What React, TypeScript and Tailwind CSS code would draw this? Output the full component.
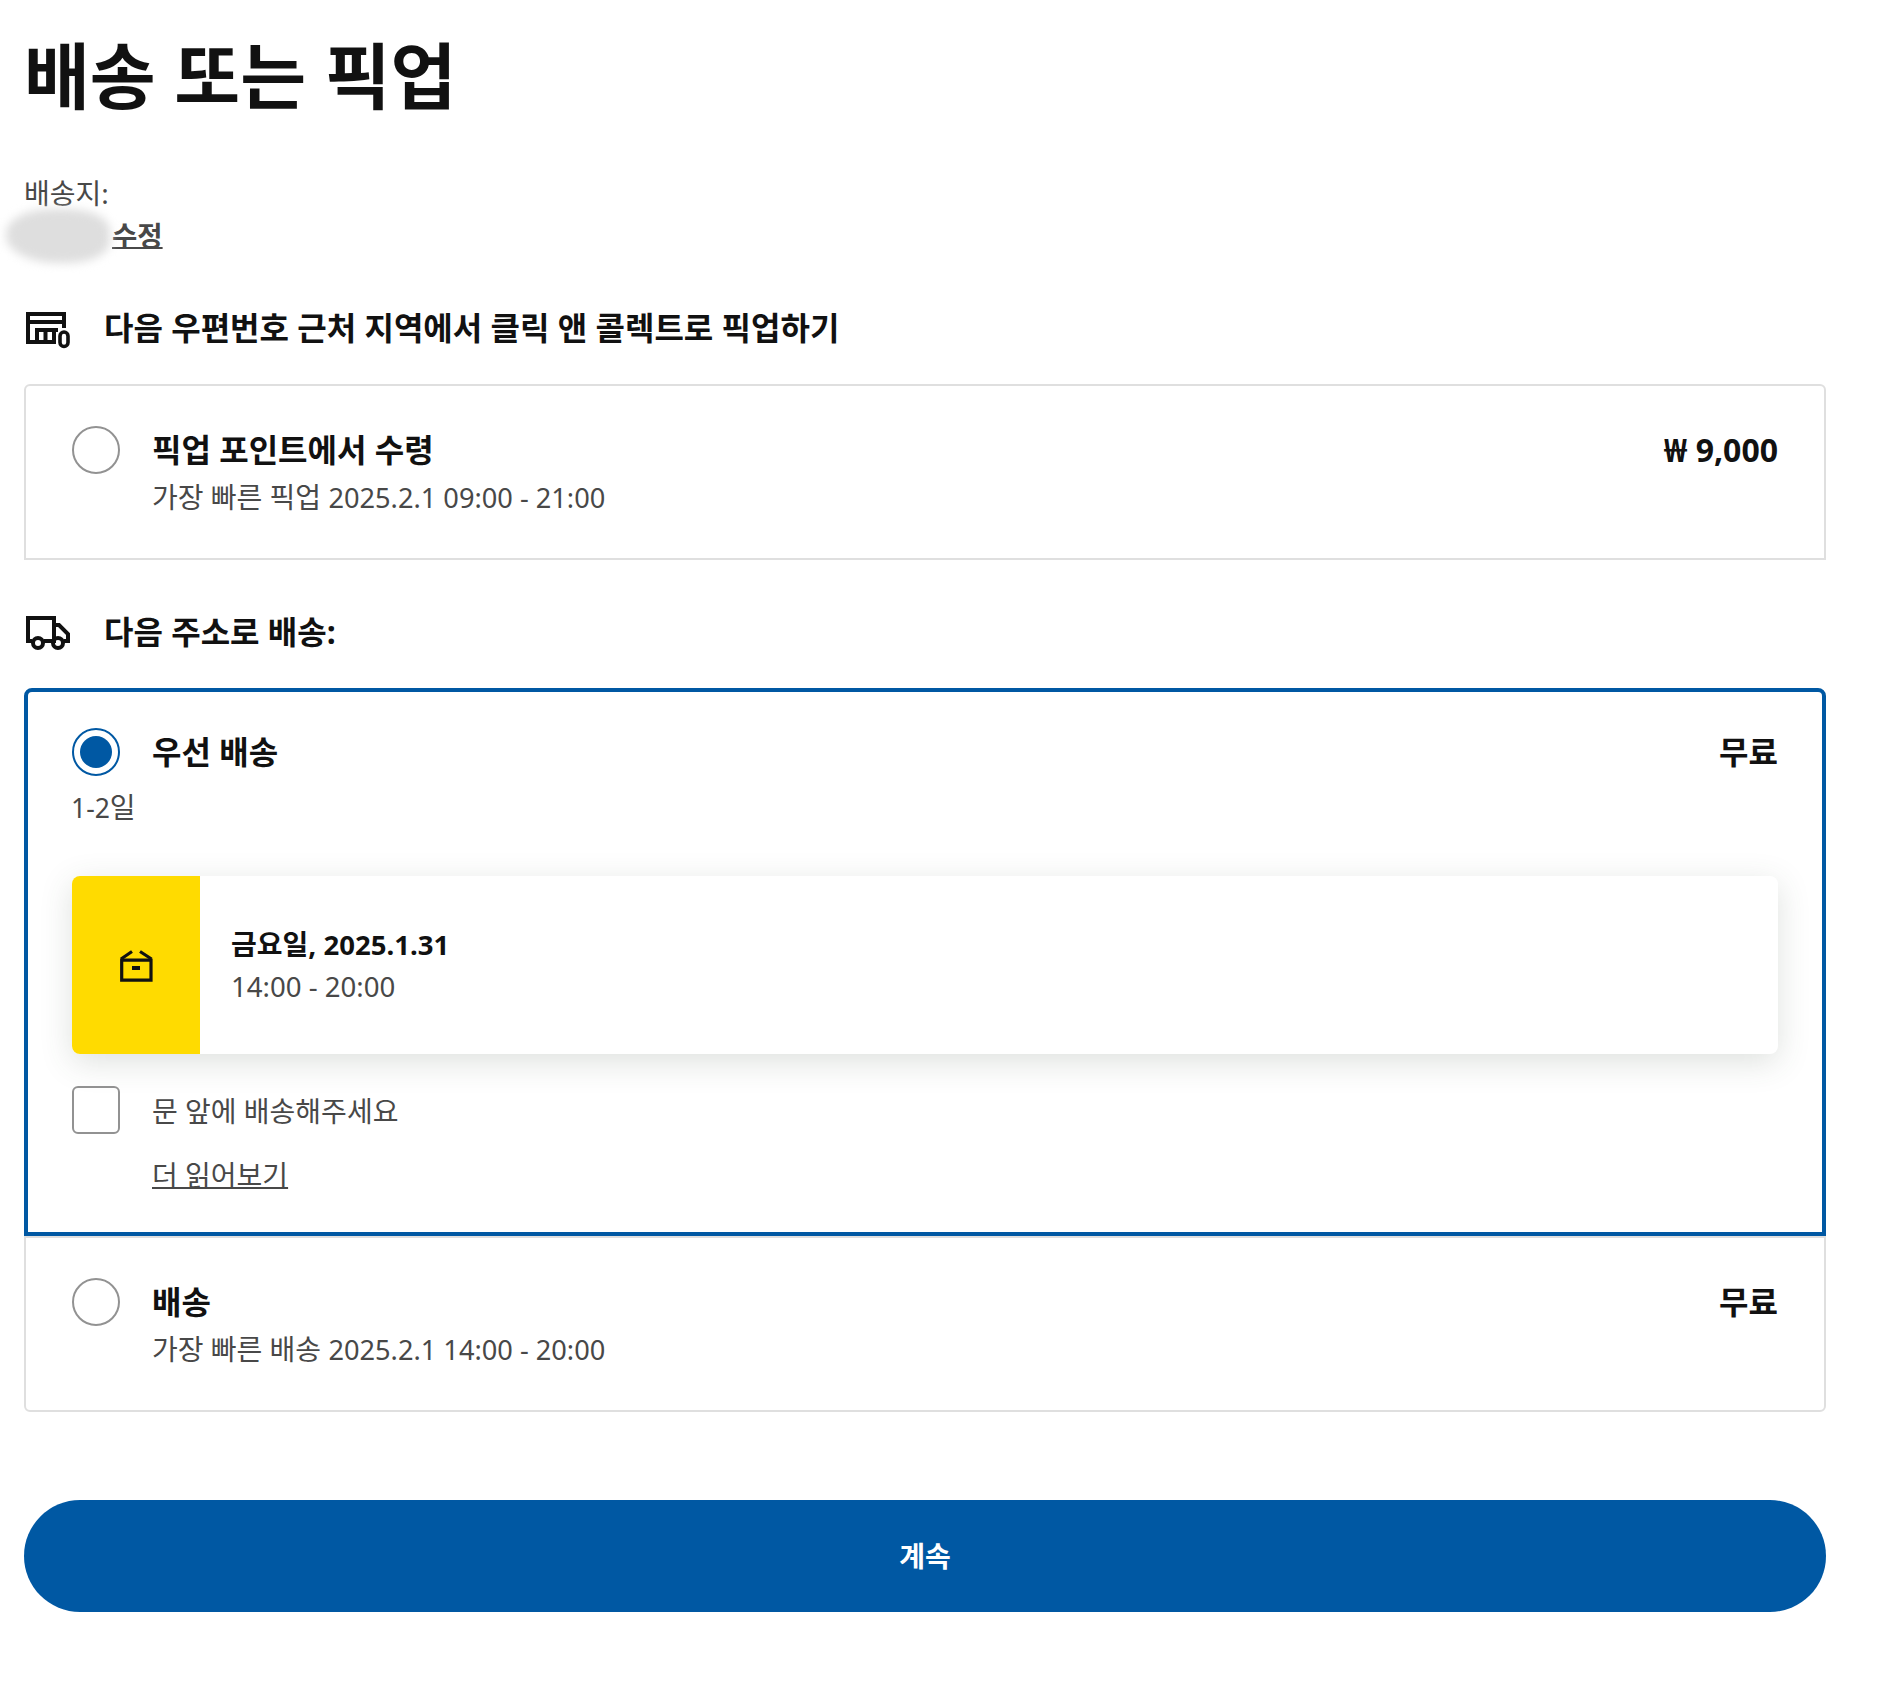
import React from 'react';

const FONT = 'font-["Noto_Sans","Noto_Sans_CJK_KR",sans-serif]';

const StoreIcon: React.FC = () => (
  <svg width="48" height="48" viewBox="0 0 48 48" fill="none" stroke="#111111" strokeWidth="4">
    <path d="M40 24V10H4v28h28" />
    <path d="M4 18h36" />
    <path d="M13 38V26h21" />
    <path d="M21.500 26v12M30 26v12" />
    <rect x="36" y="28" width="8" height="14.500" rx="4" strokeWidth="3.600" />
  </svg>
);

const TruckIcon: React.FC = () => (
  <svg width="48" height="48" viewBox="0 0 48 48" fill="none" stroke="#111111" strokeWidth="4">
    <path d="M8 33H4V10h26v23H20" />
    <path d="M30 17h5l9 9v7h-4M30 33h-2" />
    <circle cx="14" cy="35" r="5" />
    <circle cx="34" cy="35" r="5" />
  </svg>
);

const BoxIcon: React.FC = () => (
  <svg className="overflow-visible" width="32" height="32" viewBox="0 0 32 32" fill="none" stroke="#111111" strokeWidth="3.200">
    <path d="M1.700 11.200h29.300v20H1.700z" />
    <path d="M1 10 12 2.500M31.500 10 20 2.500" />
    <path d="M12 19h8" strokeWidth="4" />
  </svg>
);

const Radio: React.FC<{ checked?: boolean }> = ({ checked }) =>
  checked ? (
    <span className="w-12 h-12 shrink-0 rounded-full border-2 border-[#0058a3] flex items-center justify-center">
      <span className="w-8 h-8 rounded-full bg-[#0058a3]" />
    </span>
  ) : (
    <span className="w-12 h-12 shrink-0 rounded-full border-2 border-[#929292]" />
  );

const Option: React.FC<{ title: string; price: string; sub: string; time: string; className: string }> = ({ title, price, sub, time, className }) => (
  <div className={`h-[176px] border-2 border-[#dfdfdf] px-[46px] pt-10 ${className}`}>
    <div className="flex items-center h-12">
      <Radio />
      <span className="ml-8 text-[32px] font-bold text-[#111111]">{title}</span>
      <span className="ml-auto text-[32px] font-bold text-[#111111]">{price}</span>
    </div>
    <p className="ml-20 mt-[3px] text-[28px] leading-[41px] text-[#484848]">
      {sub} <span className="text-[27.2px] leading-none">{time}</span>
    </p>
  </div>
);

export default function App() {
  return (
    <div className={`${FONT} bg-white min-h-[1684px] px-6 w-[1850px] overflow-hidden`}>
      <h1 className="pt-[27px] text-[71.6px] leading-[96px] font-bold text-[#111111]">배송 또는 픽업</h1>

      <p className="mt-[50px] text-[28px] leading-[41px] text-[#484848]">배송지:</p>
      <div className="flex mt-[1px] text-[27.5px] leading-[41px] text-[#484848]">
        <span className="relative w-[88px]">
          <span className="absolute -left-[18px] -top-[6px] w-[104px] h-[54px] rounded-[45%_40%_40%_50%] bg-[#dedede] blur-[5px]" />
        </span>
        <a className="underline decoration-2 font-bold">수정</a>
      </div>

      <div className="flex items-center mt-12 h-12">
        <StoreIcon />
        <h2 className="ml-8 text-[32px] font-bold text-[#111111]">다음 우편번호 근처 지역에서 클릭 앤 콜렉트로 픽업하기</h2>
      </div>

      <Option className="mt-8 rounded-t-[6px]" title="픽업 포인트에서 수령" price="₩ 9,000" sub="가장 빠른 픽업" time="2025.2.1 09:00 - 21:00" />

      <div className="flex items-center mt-12 h-12">
        <TruckIcon />
        <h2 className="ml-8 text-[32px] font-bold text-[#111111]">다음 주소로 배송:</h2>
      </div>

      <div className="mt-8 h-[548px] border-4 border-[#0058a3] rounded-t-[8px] px-11 pt-9">
        <div className="flex items-center h-12">
          <Radio checked />
          <span className="ml-8 text-[32px] font-bold text-[#111111]">우선 배송</span>
          <span className="ml-auto text-[32px] font-bold text-[#111111]">무료</span>
        </div>
        <p className="mt-[11px] -ml-px h-[41px] text-[28px] leading-[41px] text-[#484848]">
          <span className="text-[26.5px] leading-none">1-2</span>일
        </p>

        <div className="mt-12 h-[178px] flex rounded-[8px] bg-white shadow-[0_8px_32px_rgba(60,80,60,0.17)] overflow-hidden">
          <div className="w-32 bg-[#ffdb00] flex items-center justify-center">
            <BoxIcon />
          </div>
          <div className="ml-[31px] flex flex-col justify-center">
            <p className="h-[42px] text-[28px] leading-[42px] font-bold text-[#111111]">
              금요일, <span className="text-[27.5px] leading-none">2025.1.31</span>
            </p>
            <p className="text-[27.6px] leading-[42px] text-[#484848]">14:00 - 20:00</p>
          </div>
        </div>

        <div className="flex items-center mt-8 h-12">
          <span className="w-12 h-12 shrink-0 rounded-[6px] border-2 border-[#929292]" />
          <span className="ml-8 text-[28px] pt-[1px] text-[#484848]">문 앞에 배송해주세요</span>
        </div>
        <a className="block ml-20 mt-[21px] text-[28px] leading-[41px] text-[#484848] underline decoration-2">더 읽어보기</a>
      </div>

      <Option className="rounded-b-[6px]" title="배송" price="무료" sub="가장 빠른 배송" time="2025.2.1 14:00 - 20:00" />

      <button className="mt-[88px] w-full h-[112px] rounded-full bg-[#0058a3] text-white text-[28px] font-bold">계속</button>
    </div>
  );
}
